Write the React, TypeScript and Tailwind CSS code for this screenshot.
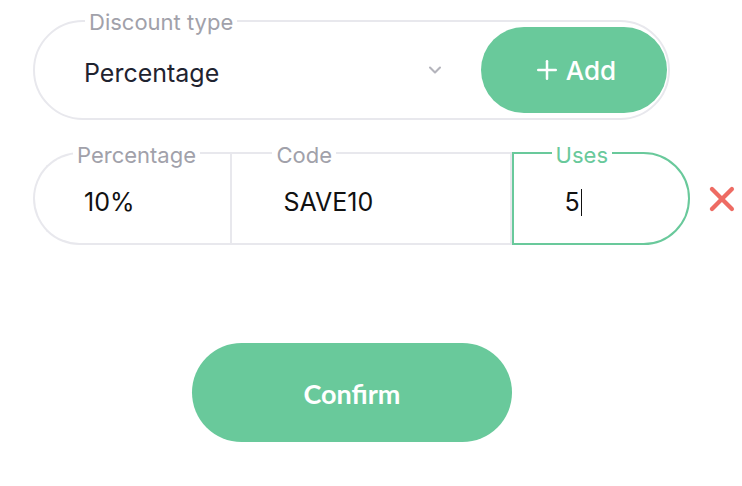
import { ChevronDown, Plus, X } from "lucide-react";

const font = { fontFamily: "Inter, 'Noto Sans', sans-serif" };

function Label({ text, active, className }: { text: string; active?: boolean; className: string }) {
  return (
    <span
      className={`absolute bg-white px-1 text-[22px] leading-6 ${active ? "text-[#69c99b]" : "text-[#a1a1aa]"} ${className}`}
    >
      {text}
    </span>
  );
}

export default function App() {
  return (
    <div className="min-h-[486px] w-[742px] bg-white pl-[33px] pt-[20px]" style={font}>
      {/* discount type */}
      <div className="relative flex h-[100px] w-[637px] items-center rounded-full border-2 border-[#e8e8ed] pl-[49px] pr-px">
        <Label text="Discount type" className="-top-[12px] left-[50px]" />
        <span className="pt-2 text-[25px] text-[#1f2330]">Percentage</span>
        <ChevronDown size={20} strokeWidth={2.5} className="ml-auto mr-[36px] text-[#b4b4bc]" />
        <button
          type="button"
          className="flex h-[86px] w-[186px] items-center justify-center gap-1 rounded-full bg-[#69c99b] text-[26px] font-medium text-white"
        >
          <Plus size={30} strokeWidth={2} />
          Add
        </button>
      </div>

      {/* code row */}
      <div className="mt-[32px] flex items-center">
        <div className="relative flex h-[93px] w-[198px] items-center rounded-l-full border-2 border-r-0 border-[#e8e8ed] pl-[49px]">
          <Label text="Percentage" className="-top-[11px] left-[38px]" />
          <span className="pt-2 text-[25px] text-[#111]">10%</span>
        </div>
        <div className="relative flex h-[93px] w-[282px] items-center border-2 border-[#e8e8ed] pl-[51px]">
          <Label text="Code" className="-top-[11px] left-[40px]" />
          <span className="pt-2 text-[25px] text-[#111]">SAVE10</span>
        </div>
        <div className="relative flex h-[93px] w-[179px] items-center rounded-r-full border-2 border-[#69c99b] pl-[51px]">
          <Label text="Uses" active className="-top-[11px] left-[38px]" />
          <span className="pt-2 text-[25px] text-[#111]">5</span>
          <span className="ml-px mt-2 h-[27px] w-[1.5px] bg-[#111]" />
        </div>
        <X size={40} strokeWidth={2.6} className="ml-[12px] text-[#ee6b63]" />
      </div>

      {/* confirm */}
      <button
        type="button"
        className="ml-[159px] mt-[98px] flex h-[99px] w-[320px] items-center justify-center rounded-full bg-[#69c99b] pt-1 text-[27px] font-bold text-white"
        style={{ fontFamily: "Lato, sans-serif" }}
      >
        Confirm
      </button>
    </div>
  );
}
